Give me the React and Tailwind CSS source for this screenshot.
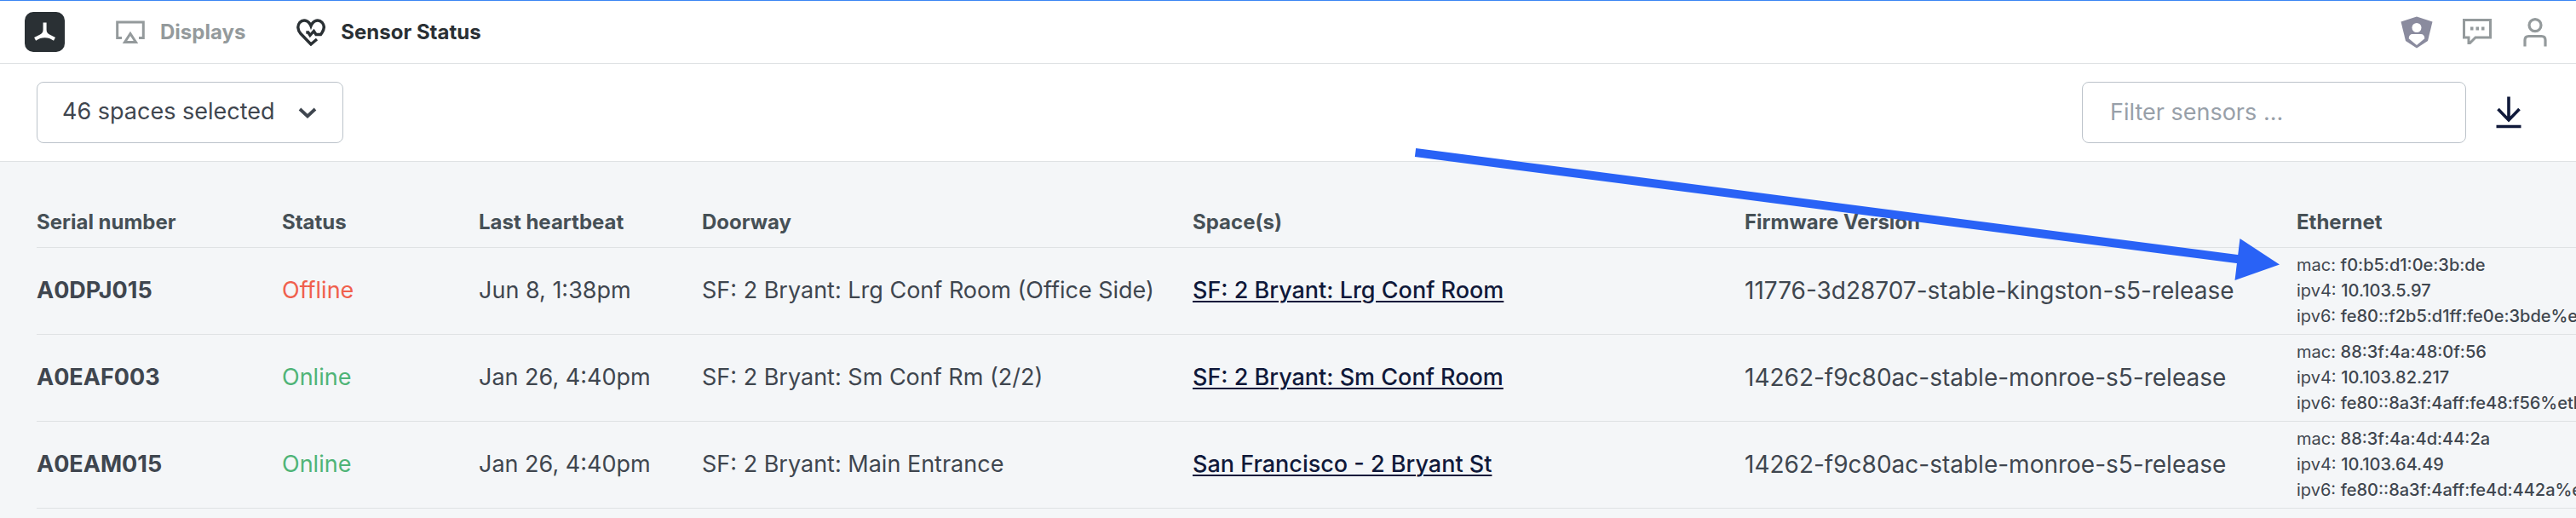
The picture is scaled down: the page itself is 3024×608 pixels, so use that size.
import { useState } from 'react';

const sensors = [
  {
    serial: 'A0DPJ015',
    status: 'Offline',
    heartbeat: 'Jun 8, 1:38pm',
    doorway: 'SF: 2 Bryant: Lrg Conf Room (Office Side)',
    space: 'SF: 2 Bryant: Lrg Conf Room',
    firmware: '11776-3d28707-stable-kingston-s5-release',
    mac: 'f0:b5:d1:0e:3b:de',
    ipv4: '10.103.5.97',
    ipv6: 'fe80::f2b5:d1ff:fe0e:3bde%eth0',
  },
  {
    serial: 'A0EAF003',
    status: 'Online',
    heartbeat: 'Jan 26, 4:40pm',
    doorway: 'SF: 2 Bryant: Sm Conf Rm (2/2)',
    space: 'SF: 2 Bryant: Sm Conf Room',
    firmware: '14262-f9c80ac-stable-monroe-s5-release',
    mac: '88:3f:4a:48:0f:56',
    ipv4: '10.103.82.217',
    ipv6: 'fe80::8a3f:4aff:fe48:f56%eth0',
  },
  {
    serial: 'A0EAM015',
    status: 'Online',
    heartbeat: 'Jan 26, 4:40pm',
    doorway: 'SF: 2 Bryant: Main Entrance',
    space: 'San Francisco - 2 Bryant St',
    firmware: '14262-f9c80ac-stable-monroe-s5-release',
    mac: '88:3f:4a:4d:44:2a',
    ipv4: '10.103.64.49',
    ipv6: 'fe80::8a3f:4aff:fe4d:442a%eth0',
  },
];

function Logo() {
  return (
    <svg width="47" height="47" viewBox="0 0 47 47" aria-hidden="true">
      <rect width="47" height="47" rx="10" fill="#2a3034" />
      <path
        d="M21.6 12.5h4v8.5c0 3 1.5 4.600 4 5.800l6.400 3.100-2 3.900c-3.500-2.600-6.500-3.600-10.400-3.600s-7 1-10.500 3.600l-2-3.900 6.500-3.100c2.500-1.200 4-2.800 4-5.800z"
        fill="#fff"
      />
    </svg>
  );
}

function DisplaysIcon() {
  return (
    <svg width="34" height="28" viewBox="0 0 34 28" fill="none" stroke="currentColor" strokeWidth="3" aria-hidden="true">
      <path d="M7 20.500H1.700V2h30.600v18.500H27" />
      <path d="M17 15.500l6.500 10h-13z" />
    </svg>
  );
}

function HeartIcon() {
  return (
    <svg width="34" height="32" viewBox="0 0 34 32" fill="none" stroke="currentColor" strokeWidth="3.400" aria-hidden="true">
      <path d="M24 24l-7 6L5 17.500C1.200 13.300.9 7.800 3.800 4.500 7.500.6 14.200 1 17 8.500 19.800 1 26.500.6 30.200 4.500c2.600 3 2.500 7.500 0 11.500L28.500 18.500h-5.500l-2.600-4-4.400 5-2.200-3.500-2.500 0" />
    </svg>
  );
}

function ShieldIcon() {
  return (
    <svg width="38" height="38" viewBox="0 0 38 38" aria-hidden="true">
      <path d="M19 .5l18.500 6-5.500 22.500-13 8.500-13-8.500L.5 6.500z" fill="#8a8b9e" />
      <circle cx="19" cy="13.500" r="5.500" fill="#fff" />
      <path d="M14 21h10c2.600 0 4.300 2 4.300 5.200L19 34l-9.300-7.800C9.700 23 11.400 21 14 21z" fill="#fff" />
    </svg>
  );
}

function ChatIcon() {
  return (
    <svg width="36" height="31" viewBox="0 0 36 31" fill="none" stroke="#949a9c" strokeWidth="3" aria-hidden="true">
      <path d="M1.500 1.500h31v20.500H15L8.500 28.500H7V22H1.500z" />
      <path d="M9 11.500h3.500M15.500 11.500H19M22 11.500h3.500" strokeWidth="4" />
    </svg>
  );
}

function UserIcon() {
  return (
    <svg width="28" height="34" viewBox="0 0 28 34" fill="none" stroke="#949a9c" strokeWidth="3.200" aria-hidden="true">
      <circle cx="14" cy="8.600" r="7" />
      <path d="M2 33.500V26c0-3 1.500-4.500 4.500-4.500h15c3 0 4.500 1.500 4.500 4.500v7.500" />
    </svg>
  );
}

function DownloadIcon() {
  return (
    <svg width="30" height="38" viewBox="0 0 30 38" fill="none" stroke="#10193a" strokeWidth="3.600" aria-hidden="true">
      <path d="M15 .5V28M2.500 15L15 28 27.500 15M.5 35.500h29" />
    </svg>
  );
}

export default function App() {
  const [filter, setFilter] = useState('');

  return (
    <div className="relative min-h-screen overflow-hidden bg-[#f4f6f8] font-[Inter,sans-serif] text-[#3f464f]">
      <header className="flex h-[75px] items-center justify-between border-t border-b border-t-[#3b86f3] border-b-[#dfe2e4] bg-white pr-[34px] pl-[29px]">
        <nav className="flex items-center text-[24px] font-bold">
          <a href="#home" aria-label="Home">
            <Logo />
          </a>
          <a href="#displays" className="ml-[60px] flex items-center gap-[18px] text-[#949a9c]">
            <DisplaysIcon />
            Displays
          </a>
          <a href="#sensors" className="ml-[60px] flex items-center gap-[18px] text-[#2a3034]">
            <HeartIcon />
            Sensor Status
          </a>
        </nav>
        <div className="flex items-center gap-[35px]">
          <button type="button" aria-label="Admin">
            <ShieldIcon />
          </button>
          <button type="button" aria-label="Messages">
            <ChatIcon />
          </button>
          <button type="button" aria-label="Account">
            <UserIcon />
          </button>
        </div>
      </header>

      <div className="flex h-[115px] items-center justify-between border-b border-[#dfe2e4] bg-white pr-[64px] pl-[43px] text-[27px]">
        <div className="relative">
          <select
            aria-label="Spaces"
            className="block h-[72px] w-[360px] appearance-none rounded-lg border border-[#bcc3ca] bg-white pb-[2px] pl-[29px]"
          >
            <option>46 spaces selected</option>
          </select>
          <svg
            className="pointer-events-none absolute top-[30px] right-[31px]"
            width="22"
            height="14"
            viewBox="0 0 22 14"
            fill="none"
            stroke="currentColor"
            strokeWidth="3.800"
            aria-hidden="true"
          >
            <path d="M2 2l9 8.500L20 2" />
          </svg>
        </div>
        <div className="flex items-center gap-[35px]">
          <input
            type="text"
            aria-label="Filter sensors"
            placeholder="Filter sensors ..."
            value={filter}
            onChange={(e) => setFilter(e.target.value)}
            className="h-[72px] w-[451px] rounded-lg border border-[#bcc3ca] bg-white pb-[2px] pl-[32px] placeholder:text-[#98a0a9]"
          />
          <button type="button" aria-label="Download">
            <DownloadIcon />
          </button>
        </div>
      </div>

      <main className="pl-[43px]">
        <table className="w-full table-fixed text-left whitespace-nowrap">
          <thead>
            <tr className="h-[100px] border-b border-[#dfe2e4] text-[24px] text-[#465056]">
              <th className="w-[288px] pt-[43px] font-bold">Serial number</th>
              <th className="w-[231px] pt-[43px] font-bold">Status</th>
              <th className="w-[262px] pt-[43px] font-bold">Last heartbeat</th>
              <th className="w-[576px] pt-[43px] font-bold">Doorway</th>
              <th className="w-[648px] pt-[43px] font-bold">Space(s)</th>
              <th className="w-[648px] pt-[43px] font-bold">Firmware Version</th>
              <th className="pt-[43px] font-bold">Ethernet</th>
            </tr>
          </thead>
          <tbody>
            {sensors.map((s) => (
              <tr key={s.serial} className="h-[102px] border-b border-[#dfe2e4] text-[27px]">
                <td className="font-bold">{s.serial}</td>
                <td className={s.status === 'Online' ? 'text-[#4fb477]' : 'text-[#f0604d]'}>{s.status}</td>
                <td>{s.heartbeat}</td>
                <td>{s.doorway}</td>
                <td>
                  <a href="#space" className="font-medium text-[#10193a] underline decoration-2 underline-offset-[3px]">
                    {s.space}
                  </a>
                </td>
                <td className="text-[28px]">{s.firmware}</td>
                <td className="overflow-hidden text-[20px] leading-[30px]">
                  <div>
                    mac: <span className="font-medium">{s.mac}</span>
                  </div>
                  <div>
                    ipv4: <span className="font-medium">{s.ipv4}</span>
                  </div>
                  <div>
                    ipv6: <span className="font-medium">{s.ipv6}</span>
                  </div>
                </td>
              </tr>
            ))}
          </tbody>
        </table>
      </main>

      {/* callout arrow pointing at the mac address */}
      <svg
        className="pointer-events-none absolute top-[170px] left-[1660px]"
        width="1020"
        height="164"
        viewBox="0 0 1020 164"
        fill="none"
        aria-hidden="true"
      >
        <path d="M1.500 9Q520 78 970 134.500" stroke="#2962f6" strokeWidth="10" />
        <path d="M969.500 110L1016 140.500 963.500 159z" fill="#2962f6" />
      </svg>
    </div>
  );
}
